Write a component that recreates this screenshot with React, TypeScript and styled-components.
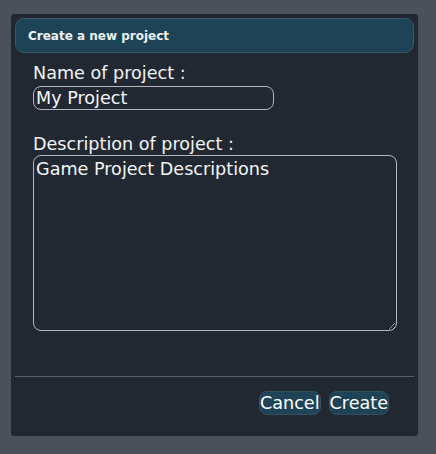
import styled, { createGlobalStyle } from "styled-components";

const GlobalStyle = createGlobalStyle`
  html, body {
    margin: 0;
    padding: 0;
    background: #4b515b;
    font-family: "DejaVu Sans", Verdana, sans-serif;
  }
`;

function App() {
  return (
    <>
      <GlobalStyle />
      <Page>
        <Dialog>
          <Header>Create a new project</Header>
          <Body>
            <Label htmlFor="name">Name of project :</Label>
            <NameInput id="name" type="text" defaultValue="My Project" />
            <Label htmlFor="desc" $gap={24}>
              Description of project :
            </Label>
            <DescArea id="desc" defaultValue="Game Project Descriptions" />
          </Body>
          <Footer>
            <Button type="button">Cancel</Button>
            <Button type="button">Create</Button>
          </Footer>
        </Dialog>
      </Page>
    </>
  );
}

export default App;

const Page = styled.div`
  padding: 14px 0 0 11px;
  height: 454px;
  box-sizing: border-box;
`;

const Dialog = styled.div`
  width: 407px;
  height: 422px;
  box-sizing: border-box;
  padding: 4px;
  background: #222832;
  border-radius: 3px;
  display: flex;
  flex-direction: column;
`;

const Header = styled.div`
  height: 35px;
  box-sizing: border-box;
  display: flex;
  align-items: center;
  padding-left: 12px;
  background: #1e4256;
  border: 1px solid #3b5666;
  border-radius: 9px;
  color: #eef3f5;
  font-weight: bold;
  font-size: 12px;
`;

const Body = styled.div`
  display: flex;
  flex-direction: column;
  align-items: flex-start;
  padding: 10px 0 0 18px;
  flex: 1;
`;

const Label = styled.label<{ $gap?: number }>`
  color: #f2f4f6;
  font-size: 17.6px;
  line-height: 21px;
  margin-top: ${(p) => p.$gap ?? 0}px;
`;

const fieldStyle = `
  box-sizing: border-box;
  background: #222832;
  color: #f4f6f8;
  border: 1px solid #b4b8bd;
  border-radius: 8px;
  font-family: "DejaVu Sans", Verdana, sans-serif;
  font-size: 17.6px;
  padding: 1px 2px;
  outline: none;
`;

const NameInput = styled.input`
  ${fieldStyle}
  width: 241px;
  height: 24px;
  line-height: 20px;
  margin-top: 2px;
`;

const DescArea = styled.textarea`
  ${fieldStyle}
  width: 364px;
  height: 176px;
  line-height: 21px;
  padding-top: 3px;
  margin-top: 0;
  resize: both;
`;

const Footer = styled.div`
  border-top: 1px solid #5d6168;
  display: flex;
  justify-content: flex-end;
  gap: 8px;
  padding: 14px 25px 17px 0;
`;

const Button = styled.button`
  box-sizing: border-box;
  height: 24px;
  padding: 0;
  background: #1e4256;
  border: 1px solid #34505f;
  border-radius: 8px;
  color: #ffffff;
  font-family: "DejaVu Sans", Verdana, sans-serif;
  font-size: 17.6px;
  line-height: 20px;
  cursor: pointer;
`;
